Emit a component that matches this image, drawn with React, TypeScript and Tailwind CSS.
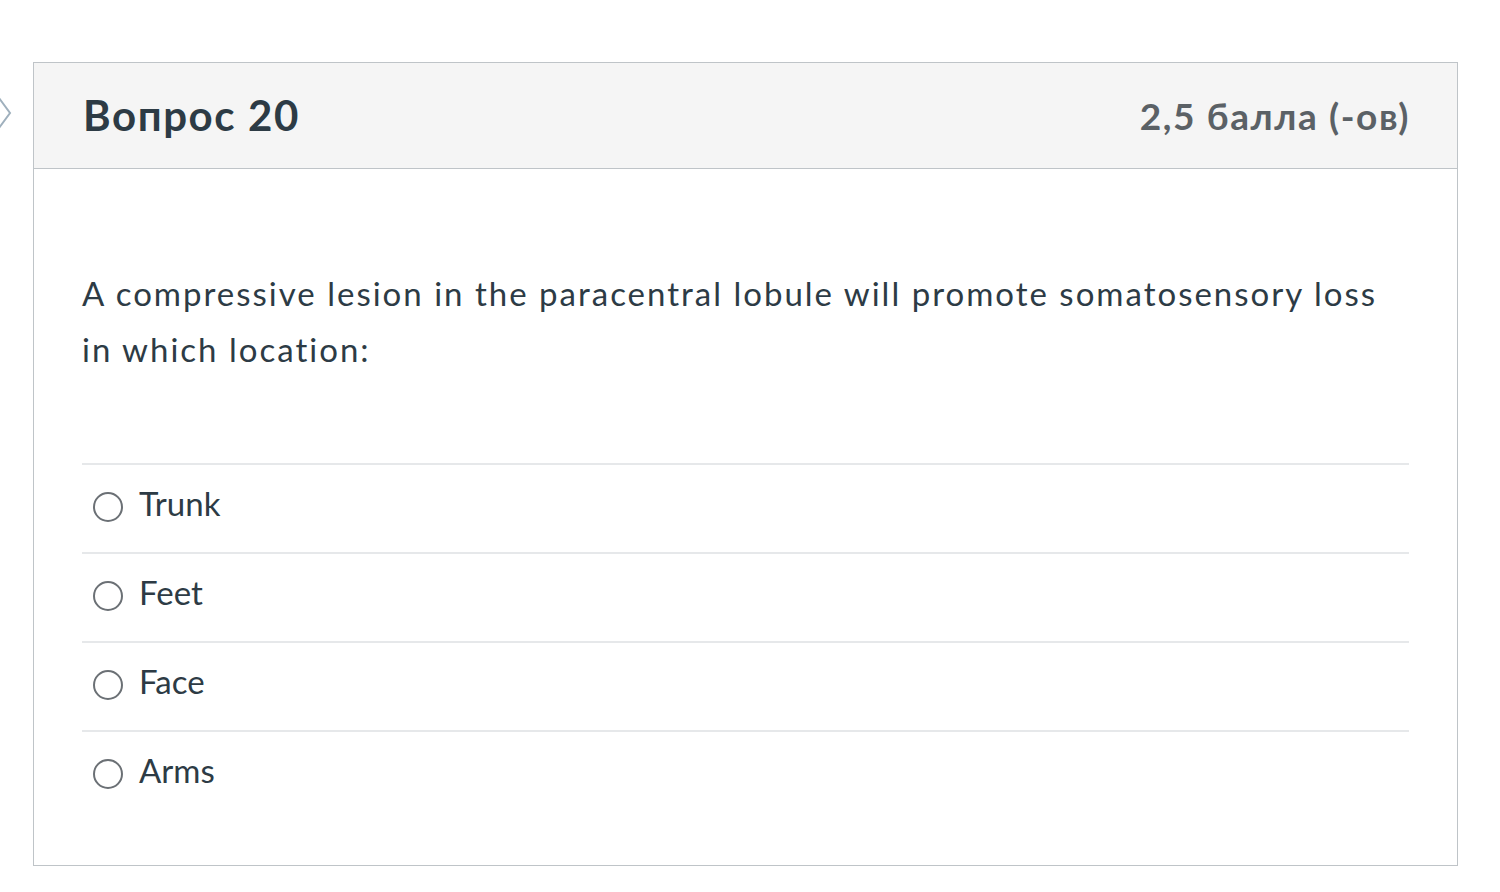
const answers = ["Trunk", "Feet", "Face", "Arms"];

export default function App() {
  return (
    <div className="relative min-h-[892px] w-[1500px] bg-white font-['Lato','Noto_Sans',sans-serif] text-[#2d3b45]">
      {/* collapsed side-nav chevron peeking in from the left edge */}
      <svg
        className="absolute left-[-8px] top-[92px] h-[42px] w-[22px] text-[#9fb0bd]"
        viewBox="0 0 22 42"
        fill="none"
        stroke="currentColor"
        strokeWidth="2"
      >
        <path d="M4 2l14 19L4 40" />
      </svg>

      <div className="pt-[62px] pl-[33px]">
        <div className="w-[1425px] border border-[#bfc4c8]">
          <div className="flex h-[106px] items-center justify-between border-b border-[#bfc4c8] bg-[#f5f5f5] pl-[49px] pr-[47px]">
            <h2 className="text-[42px] font-bold tracking-[1.6px] text-[#2d3b45]">Вопрос 20</h2>
            <span className="text-[37px] font-bold tracking-[1.6px] text-[#5b6166]">2,5 балла (-ов)</span>
          </div>

          <div className="px-[48px] pt-[96px] pb-[46px]">
            <p className="text-[33px] leading-[56px] tracking-[2px] text-[#2d3b45]">
              A compressive lesion in the paracentral lobule will promote somatosensory loss in which location:
            </p>

            <div className="mt-[86px]">
              {answers.map((a) => (
                <label
                  key={a}
                  className="flex h-[89px] items-center gap-[16px] border-t-2 border-[#e6e8ea] pl-[11px]"
                >
                  <span className="mb-[3px] h-[30px] w-[30px] rounded-full border-2 border-[#6b7075] bg-white" />
                  <span className="mb-[9px] text-[33px] text-[#2d3b45]">{a}</span>
                </label>
              ))}
            </div>
          </div>
        </div>
      </div>
    </div>
  );
}
